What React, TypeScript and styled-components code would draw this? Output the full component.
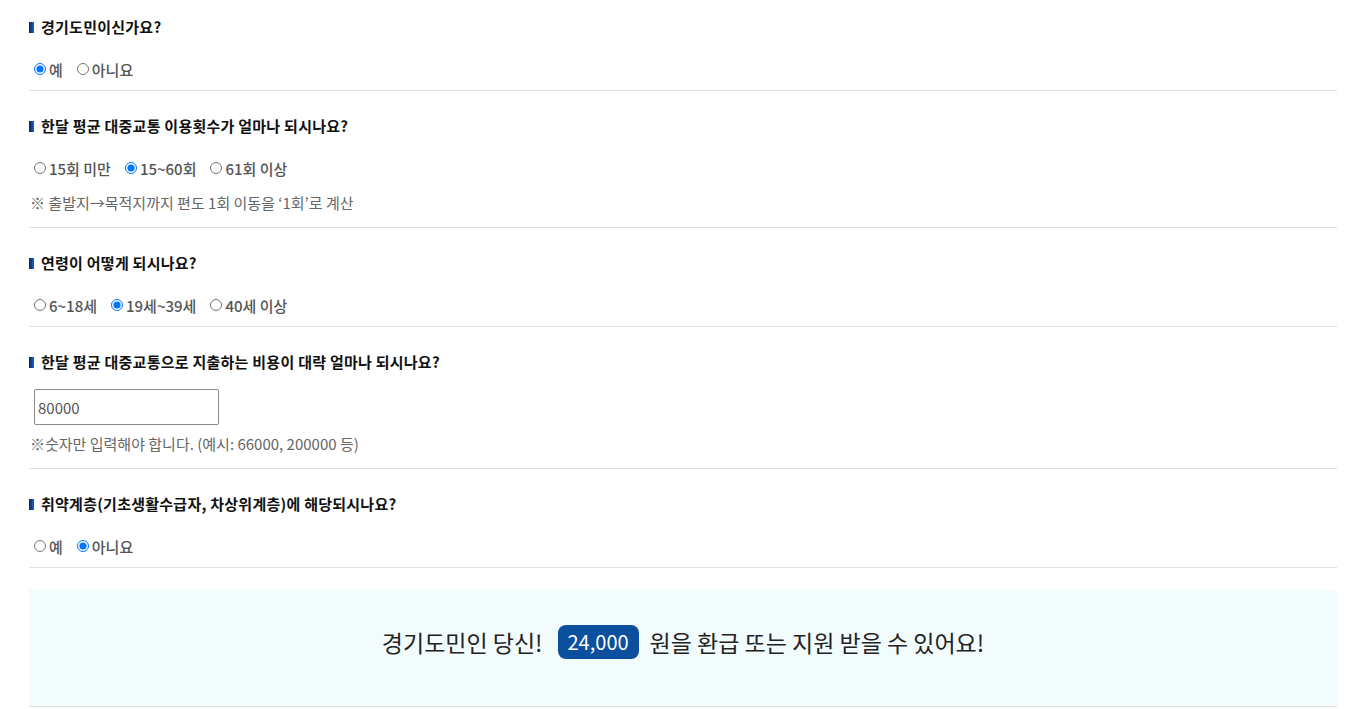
import styled, { createGlobalStyle } from "styled-components";

const GlobalStyle = createGlobalStyle`
	body {
		margin: 0;
		background: #fff;
		font-family: "Noto Sans CJK KR", "Noto Sans", sans-serif;
	}
`;

type Question = {
	title: string;
	options?: string[];
	checked?: number;
	note?: string;
	input?: string;
};

const questions: Question[] = [
	{ title: "경기도민이신가요?", options: ["예", "아니요"], checked: 0 },
	{
		title: "한달 평균 대중교통 이용횟수가 얼마나 되시나요?",
		options: ["15회 미만", "15~60회", "61회 이상"],
		checked: 1,
		note: "※ 출발지→목적지까지 편도 1회 이동을 ‘1회’로 계산",
	},
	{
		title: "연령이 어떻게 되시나요?",
		options: ["6~18세", "19세~39세", "40세 이상"],
		checked: 1,
	},
	{
		title: "한달 평균 대중교통으로 지출하는 비용이 대략 얼마나 되시나요?",
		input: "80000",
		note: "※숫자만 입력해야 합니다. (예시: 66000, 200000 등)",
	},
	{
		title: "취약계층(기초생활수급자, 차상위계층)에 해당되시나요?",
		options: ["예", "아니요"],
		checked: 1,
	},
];

function App() {
	return (
		<>
			<GlobalStyle />
			<Page>
				{questions.map((q, i) => (
					<Section key={i}>
						<Title>{q.title}</Title>
						{q.options && (
							<RadioRow>
								{q.options.map((opt, j) => (
									<Option key={j}>
										<input
											type="radio"
											name={"q" + i}
											defaultChecked={q.checked === j}
										/>
										{opt}
									</Option>
								))}
							</RadioRow>
						)}
						{q.input && <Field type="text" defaultValue={q.input} />}
						{q.note && <Note $afterInput={!!q.input}>{q.note}</Note>}
					</Section>
				))}
				<Result>
					경기도민인 당신!
					<Amount>24,000</Amount>
					원을 환급 또는 지원 받을 수 있어요!
				</Result>
			</Page>
		</>
	);
}

export default App;

const Page = styled.div`
	padding: 0 14px 0 29px;
`;

const Section = styled.div`
	padding: 24px 0 10px;
	border-bottom: 1px solid #e2e2e2;

	&:first-child {
		padding-top: 16px;
	}
`;

const Title = styled.h3`
	margin: 0;
	display: flex;
	align-items: center;
	height: 22px;
	font-size: 15px;
	line-height: 22px;
	font-weight: 700;
	color: #111;
	letter-spacing: 0.25px;

	&::before {
		content: "";
		width: 5px;
		height: 11px;
		margin-right: 7px;
		background: linear-gradient(to right, #0b1f5e, #1766cc);
	}
`;

const RadioRow = styled.div`
	margin-top: 20px;
	display: flex;
	gap: 9px;
	height: 22px;
`;

const Option = styled.label`
	display: flex;
	align-items: center;
	height: 22px;
	font-size: 15px;
	font-weight: 500;
	color: #555;

	input {
		margin: 0 3px 0 5px;
		width: 12px;
		height: 12px;
	}
`;

const Field = styled.input`
	display: block;
	margin: 16px 0 0 5px;
	box-sizing: border-box;
	width: 185px;
	height: 36px;
	padding: 0 3px;
	border: 1px solid #8a8a8a;
	border-radius: 2px;
	font-family: inherit;
	font-size: 15px;
	color: #555;
`;

const Note = styled.p<{ $afterInput?: boolean }>`
	margin: ${(p) => (p.$afterInput ? "8px" : "13px")} 0 3px 1px;
	height: 22px;
	font-size: 15px;
	line-height: 22px;
	color: #666;
`;

const Result = styled.div`
	margin-top: 22px;
	padding: 35px 0 47px;
	display: flex;
	align-items: center;
	justify-content: center;
	background: #f2fcfd;
	border-bottom: 1px solid #dcdcdc;
	font-size: 23px;
	line-height: 34px;
	color: #222;
`;

const Amount = styled.span`
	margin: 0 11px 0 15px;
	padding: 0 10px;
	height: 34px;
	line-height: 34px;
	border-radius: 8px;
	background: #0b4f9e;
	color: #fff;
	font-size: 20px;
`;
